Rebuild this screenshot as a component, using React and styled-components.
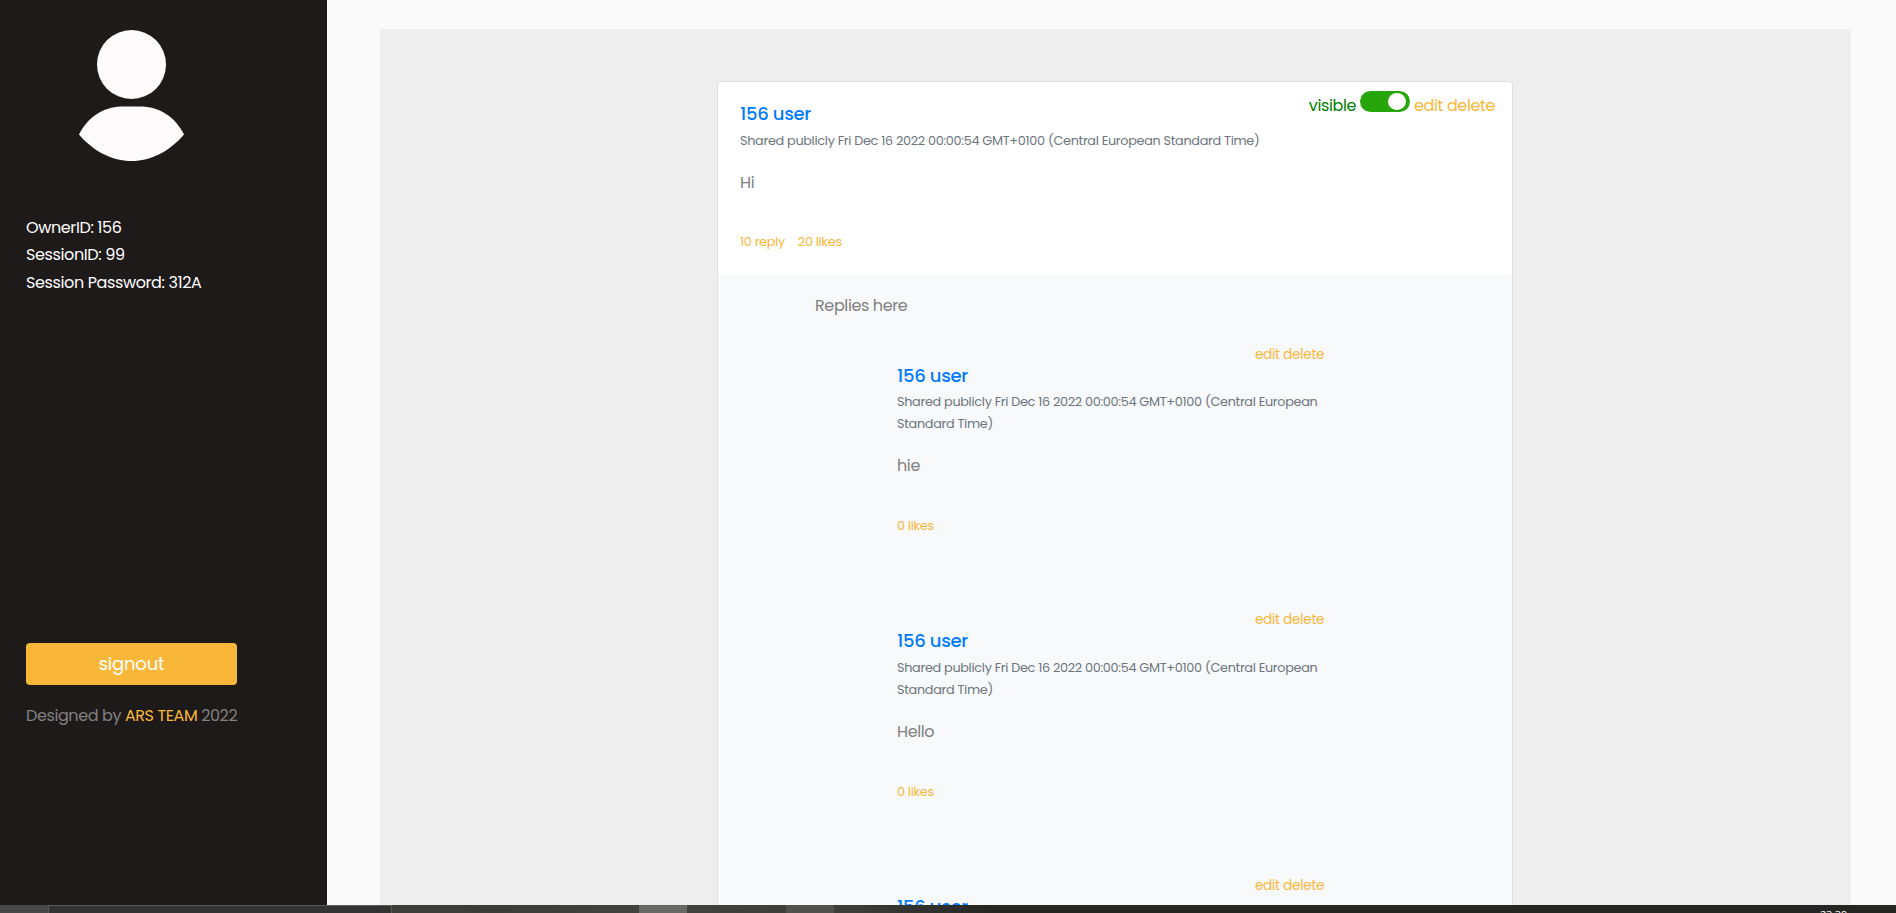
import React from "react";
import styled, { createGlobalStyle } from "styled-components";

const GlobalStyle = createGlobalStyle`
  * { box-sizing: border-box; }
  html, body { margin: 0; height: 100%; overflow: hidden; }
  body {
    background: #fafafa;
    color: gray;
    font-family: Poppins, Inter, "Open Sans", sans-serif;
    font-size: 16px;
    line-height: 27.2px;
    letter-spacing: -0.38px;
  }
  p, h4 { margin: 0; }
`;

const Screen = styled.div`
  height: 913px;
  display: flex;
  flex-direction: column;
  overflow: hidden;
`;

const Page = styled.div`
  display: flex;
  height: 905px;
  overflow: hidden;
`;

const Sidebar = styled.aside`
  width: 327px;
  flex: none;
  background: #1e1a19;
  padding: 30px 26px 0;
  display: flex;
  flex-direction: column;
`;

const Avatar = styled.svg`
  display: block;
  width: 106px;
  height: 132px;
  margin-left: 52px;
`;

const SessionInfo = styled.div`
  margin-top: 52px;
  padding-top: 0.2px;
  height: 429px;
  color: #fff;
`;

const InfoLine = styled.p`
  white-space: nowrap;
`;

const SignoutButton = styled.button`
  width: 211px;
  height: 42px;
  padding: 0;
  border: 0;
  border-radius: 4px;
  background: #f8b739;
  color: #fff;
  font: 18px/40px Poppins, Inter, sans-serif;
  letter-spacing: -0.2px;
`;

const Credit = styled.p`
  margin-top: 17px;
  white-space: nowrap;
  letter-spacing: -0.4px;
  span { color: #f8b739; }
`;

const Content = styled.main`
  flex: 1;
  padding: 29px 45px 0 53px;
`;

const Panel = styled.section`
  height: 100%;
  background: #eeeeee;
  padding: 52px 338px 0 337px;
`;

const Card = styled.article`
  height: 1200px;
  border: 1px solid #dfdfdf;
  border-radius: 4px;
  background: #fff;
  overflow: hidden;
`;

const Post = styled.div`
  height: 193px;
  padding: 9px 17px 0 22px;
`;

const PostHeader = styled.div`
  display: flex;
  justify-content: space-between;
  height: 36px;
`;

const UserName = styled.h4`
  color: #007bff;
  font-size: 18px;
  font-weight: 500;
  line-height: ${(p) => (p.$reply ? 24 : 27)}px;
  margin-top: ${(p) => (p.$reply ? -1 : 9)}px;
  letter-spacing: -0.3px;
`;

const PostTools = styled.div`
  display: flex;
  gap: 4px;
  color: #f8b739;
  line-height: 29px;
`;

const Visibility = styled.span`
  color: green;
`;

const Toggle = styled.span`
  display: flex;
  justify-content: flex-end;
  width: 50px;
  height: 21px;
  padding: 2px 4px 0 0;
  border-radius: 11px;
  background: #27a60b;
`;

const Knob = styled.span`
  width: 18px;
  height: 17px;
  border-radius: 50%;
  background: #fff;
`;

const Shared = styled.p`
  margin-top: 3px;
  color: #6c757d;
  font-size: 12.8px;
  line-height: 21.8px;
  letter-spacing: -0.3px;
`;

const Message = styled.p`
  margin-top: ${(p) => (p.$reply ? 17.6 : 17)}px;
`;

const Stats = styled.div`
  display: flex;
  gap: 13px;
  margin-top: ${(p) => (p.$reply ? 35.6 : 35)}px;
  color: #f8b739;
  font-size: 12.8px;
  line-height: 22px;
  letter-spacing: -0.3px;
`;

const Replies = styled.div`
  background: #f8f9fb;
  height: 1000px;
  padding: 16.6px 97px 0;
`;

const RepliesTitle = styled.p`
  margin-bottom: 25.1px;
`;

const Reply = styled.div`
  width: 431px;
  margin-left: 82px;
  height: 265.6px;

  ${Shared} { margin-top: 3.4px; }
`;

const ReplyTools = styled.div`
  display: flex;
  justify-content: flex-end;
  padding-right: 3.8px;
  color: #f8b739;
  font-size: 13.6px;
  line-height: 21px;
  letter-spacing: -0.28px;
`;

const Taskbar = styled.footer`
  height: 8px;
  flex: none;
  display: flex;
  background: linear-gradient(90deg, #444 0, #3b3b39 500px, #42423e 632px, #3c3c39 850px, #252523 1000px, #252523 100%);
  overflow: hidden;
`;

const Task = styled.span`
  height: 9px;
  width: ${(p) => p.$width}px;
  margin-left: ${(p) => p.$gap}px;
  background: ${(p) => p.$color};
  border: ${(p) => (p.$outlined ? "1px solid #5a5a5a" : "0")};
`;

const Clock = styled.span`
  margin: 2px 49px 0 auto;
  color: #fff;
  font: 11px/16px "Open Sans", sans-serif;
  letter-spacing: -0.2px;
`;

const shared = "Shared publicly Fri Dec 16 2022 00:00:54 GMT+0100 (Central European Standard Time)";
const replies = ["hie", "Hello", ""];

export default function App() {
  return (
    <>
      <GlobalStyle />
      <Screen>
        <Page>
          <Sidebar>
            <Avatar viewBox="0 0 106 132">
              <circle cx="53.5" cy="34.5" r="34.5" fill="#fdfbfc" />
              <path d="M43 76.5H64C82 77 97 87 106 104.500C92 121 73 131 53.500 131S15 121 1 104.500C10 87 25 77 43 76.500Z" fill="#fdfbfc" />
            </Avatar>
            <SessionInfo>
              <InfoLine>OwnerID: 156</InfoLine>
              <InfoLine>SessionID: 99</InfoLine>
              <InfoLine>Session Password: 312A</InfoLine>
            </SessionInfo>
            <SignoutButton>signout</SignoutButton>
            <Credit>Designed by <span>ARS TEAM</span> 2022</Credit>
          </Sidebar>
          <Content>
            <Panel>
              <Card>
                <Post>
                  <PostHeader>
                    <UserName>156 user</UserName>
                    <PostTools>
                      <Visibility>visible</Visibility>
                      <Toggle><Knob /></Toggle>
                      <span>edit delete</span>
                    </PostTools>
                  </PostHeader>
                  <Shared>{shared}</Shared>
                  <Message>Hi</Message>
                  <Stats><span>10 reply</span><span>20 likes</span></Stats>
                </Post>
                <Replies>
                  <RepliesTitle>Replies here</RepliesTitle>
                  {replies.map((text, i) => (
                    <Reply key={i}>
                      <ReplyTools>edit delete</ReplyTools>
                      <UserName $reply>156 user</UserName>
                      <Shared>{shared}</Shared>
                      <Message $reply>{text}</Message>
                      <Stats $reply><span>0 likes</span></Stats>
                    </Reply>
                  ))}
                </Replies>
              </Card>
            </Panel>
          </Content>
        </Page>
        <Taskbar>
          <Task $gap={0} $width={48} $color="#484848" />
          <Task $gap={0} $width={344} $color="#333" $outlined />
          <Task $gap={247} $width={48} $color="#686866" />
          <Task $gap={99} $width={48} $color="#51514f" />
          <Clock>23:39</Clock>
        </Taskbar>
      </Screen>
    </>
  );
}
